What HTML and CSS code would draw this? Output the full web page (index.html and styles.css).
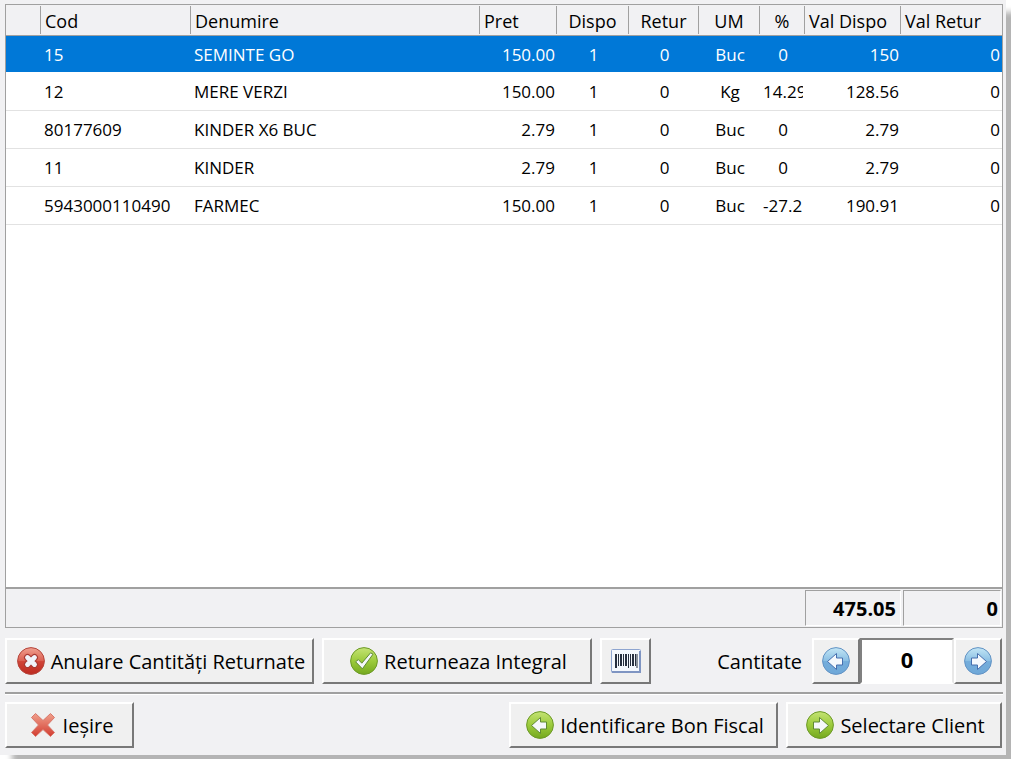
FILE: index.html
```html
<!DOCTYPE html>
<html lang="ro">
<head>
  <meta charset="UTF-8">
  <title>Retur</title>
  <link rel="stylesheet" href="styles.css">
</head>
<body>

  <!-- shared gradients -->
  <svg class="defs" width="0" height="0" aria-hidden="true">
    <defs>
      <linearGradient id="red" x1="0" y1="0" x2="0" y2="1">
        <stop offset="0" stop-color="#f0a090"/><stop offset=".48" stop-color="#dc6254"/>
        <stop offset=".52" stop-color="#d04438"/><stop offset="1" stop-color="#bd2a20"/>
      </linearGradient>
      <linearGradient id="green" x1="0" y1="0" x2="0" y2="1">
        <stop offset="0" stop-color="#c4e374"/><stop offset=".5" stop-color="#9ccb3c"/>
        <stop offset="1" stop-color="#74a81e"/>
      </linearGradient>
      <linearGradient id="blue" x1="0" y1="0" x2="0" y2="1">
        <stop offset="0" stop-color="#c3e6f5"/><stop offset=".48" stop-color="#8cc0e4"/>
        <stop offset=".52" stop-color="#74addb"/><stop offset="1" stop-color="#6fa8d8"/>
      </linearGradient>
      <linearGradient id="cross" x1="0" y1="0" x2="0" y2="1">
        <stop offset="0" stop-color="#f0a08c"/><stop offset="1" stop-color="#d23c30"/>
      </linearGradient>
    </defs>
  </svg>

  <main class="window">
    <section class="list">
      <table class="grid">
        <colgroup>
          <col class="w-mark"><col class="w-cod"><col><col class="w-pret"><col class="w-dispo">
          <col class="w-retur"><col class="w-um"><col class="w-pct"><col class="w-val"><col class="w-last">
        </colgroup>
        <thead>
          <tr>
            <th><span></span></th>
            <th><span>Cod</span></th>
            <th><span>Denumire</span></th>
            <th><span>Pret</span></th>
            <th class="center"><span>Dispo</span></th>
            <th class="center"><span>Retur</span></th>
            <th class="center"><span>UM</span></th>
            <th class="center"><span>%</span></th>
            <th><span>Val Dispo</span></th>
            <th><span>Val Retur</span></th>
          </tr>
        </thead>
        <tbody>
          <tr class="selected"><td></td><td>15</td><td>SEMINTE GO</td><td class="num">150.00</td><td class="center">1</td><td class="center">0</td><td class="center">Buc</td><td class="center">0</td><td class="num">150</td><td class="num">0</td></tr>
          <tr><td></td><td>12</td><td>MERE VERZI</td><td class="num">150.00</td><td class="center">1</td><td class="center">0</td><td class="center">Kg</td><td class="cut"><div>14.29</div></td><td class="num">128.56</td><td class="num">0</td></tr>
          <tr><td></td><td>80177609</td><td>KINDER X6 BUC</td><td class="num">2.79</td><td class="center">1</td><td class="center">0</td><td class="center">Buc</td><td class="center">0</td><td class="num">2.79</td><td class="num">0</td></tr>
          <tr><td></td><td>11</td><td>KINDER</td><td class="num">2.79</td><td class="center">1</td><td class="center">0</td><td class="center">Buc</td><td class="center">0</td><td class="num">2.79</td><td class="num">0</td></tr>
          <tr><td></td><td>5943000110490</td><td>FARMEC</td><td class="num">150.00</td><td class="center">1</td><td class="center">0</td><td class="center">Buc</td><td class="cut"><div>-27.2</div></td><td class="num">190.91</td><td class="num">0</td></tr>
        </tbody>
      </table>
      <div class="totals">
        <output class="total">475.05</output>
        <output class="total">0</output>
      </div>
    </section>

    <div class="toolbar">
      <button class="btn btn-cancel">
        <svg class="icon" viewBox="0 0 28 28"><circle cx="14" cy="14" r="13.4" fill="url(#red)" stroke="#b5463c"/><path d="M10.500 10.500l7 7M17.500 10.500l-7 7" stroke="#a83a34" stroke-width="7" stroke-linecap="round"/><path d="M10.500 10.500l7 7M17.500 10.500l-7 7" stroke="#f0f3fa" stroke-width="4.800" stroke-linecap="round"/></svg>
        Anulare Cantități Returnate
      </button>
      <button class="btn btn-all">
        <svg class="icon" viewBox="0 0 28 28"><circle cx="14" cy="14" r="13.4" fill="url(#green)" stroke="#6d9a28"/><path d="M5.6 14.8l2.8-2.2 3.4 3.6L20.6 5.800l2.400 1.400-10.600 14.600z" fill="#f5f8fa" stroke="#5f8a35" stroke-linejoin="round"/></svg>
        Returneaza Integral
      </button>
      <button class="btn btn-scan" aria-label="Cod de bare">
        <svg class="barcode" viewBox="0 0 30 24"><rect x=".5" y=".5" width="29" height="23" rx="1" fill="#f4f8fd" stroke="#8ea5d0"/><path d="M1 23h28V2" fill="none" stroke="#7f95c2" stroke-width="2"/><path d="M4 5h2v14H4zM7 5h1v12H7zM9 5h2v12H9zM12 5h1v12h-1zM14 5h2v12h-2zM17 5h1v14h-1zM19 5h1v12h-1zM21 5h2v12h-2zM24 5h1v12h-1zM25.500 5h1v14h-1z" fill="#27303f"/></svg>
      </button>
      <div class="quantity">
        <label for="qty">Cantitate</label>
        <button class="btn btn-step" aria-label="Minus">
          <svg class="icon" viewBox="0 0 28 28"><circle cx="14" cy="14" r="13.400" fill="url(#blue)" stroke="#6393c4"/><path d="M5.500 14.500L14.500 6.500V11H20.500V18H14.500V22.500z" fill="#f5f9fd" stroke="#466fae" stroke-linejoin="round"/></svg>
        </button>
        <input id="qty" type="text" value="0">
        <button class="btn btn-step" aria-label="Plus">
          <svg class="icon" viewBox="0 0 28 28"><circle cx="14" cy="14" r="13.400" fill="url(#blue)" stroke="#6393c4"/><path d="M22.500 14.500L13.500 6.500V11H7.500V18H13.500V22.500z" fill="#f5f9fd" stroke="#466fae" stroke-linejoin="round"/></svg>
        </button>
      </div>
    </div>

    <div class="toolbar bottom">
      <button class="btn btn-exit">
        <svg class="icon" viewBox="0 0 28 28"><path d="M2.500 6.500L6.500 2.500 14 9.500 21.500 2.500 25.500 6.500 18.500 14 25.500 21.500 21.500 25.500 14 18.500 6.500 25.500 2.500 21.500 9.500 14z" fill="url(#cross)" stroke="#d8776a" stroke-linejoin="round"/></svg>
        Ieșire
      </button>
      <button class="btn btn-ident">
        <svg class="icon" viewBox="0 0 28 28"><circle cx="14" cy="14" r="13.400" fill="url(#green)" stroke="#6d9a28"/><path d="M5.500 14.500L14.500 6.500V11H20.500V18H14.500V22.500z" fill="#f5f8fa" stroke="#5f8a35" stroke-linejoin="round"/></svg>
        Identificare Bon Fiscal
      </button>
      <button class="btn btn-client">
        <svg class="icon" viewBox="0 0 28 28"><circle cx="14" cy="14" r="13.400" fill="url(#green)" stroke="#6d9a28"/><path d="M22.500 14.500L13.500 6.500V11H7.500V18H13.500V22.500z" fill="#f5f8fa" stroke="#5f8a35" stroke-linejoin="round"/></svg>
        Selectare Client
      </button>
    </div>
  </main>

</body>
</html>
```

FILE: styles.css
```css
* {
  box-sizing: border-box;
}

body {
  margin: 0;
  height: 100vh;
  padding: 0 5px 4px 0;
  display: flex;
  overflow: hidden;
  background: #fff;
  font-family: "Segoe UI", "Open Sans", "Noto Sans", sans-serif;
  font-size: 17px;
  color: #000;
}

.defs {
  position: absolute;
}

.window {
  flex: 1;
  min-width: 0;
  display: flex;
  flex-direction: column;
  padding: 4px 3px 7px 5px;
  background: #f1f1f3;
  box-shadow: 12px 12px 6px #b4b4b4;
}

/* product list */
.list {
  flex: 1;
  display: flex;
  flex-direction: column;
  border: 1px solid #a0a0a0;
  background: #fff;
}

.grid {
  width: 100%;
  table-layout: fixed;
  border-collapse: separate;
  border-spacing: 0;
}

.w-mark { width: 35px; }
.w-cod { width: 150px; }
.w-pret { width: 77px; }
.w-dispo { width: 72px; }
.w-retur { width: 70px; }
.w-um { width: 61px; }
.w-pct { width: 45px; }
.w-val { width: 96px; }
.w-last { width: 101px; }

.grid th {
  height: 31px;
  padding: 0;
  background: #f1f1f3;
  border-bottom: 1px solid #a0a0a0;
  font-size: 18px;
  font-weight: normal;
  text-align: left;
}

.grid th span {
  display: block;
  height: 28px;
  line-height: 30px;
  padding-left: 4px;
  border-right: 1px solid #a0a0a0;
  white-space: nowrap;
}

.grid th.center span {
  padding-left: 0;
}

.grid th:last-child span {
  border-right: 0;
}

.grid td {
  height: 38px;
  padding: 0 2px 0 3px;
  border-bottom: 1px solid #e2e2e2;
  white-space: nowrap;
}

.grid .center {
  text-align: center;
}

.grid .num {
  text-align: right;
}

.cut div {
  overflow: hidden;
}

.grid .selected td {
  height: 37px;
  background: #0078d7;
  border-bottom-color: #fff;
  color: #fff;
}

.totals {
  display: flex;
  justify-content: flex-end;
  gap: 2px;
  margin-top: auto;
  padding: 1px 1px 1px 0;
  border-top: 2px solid #a0a0a0;
  background: #f1f1f3;
}

.total {
  width: 96px;
  height: 36px;
  line-height: 36px;
  padding-right: 4px;
  border: 1px solid #fff;
  border-top-color: #a0a0a0;
  border-left-color: #a0a0a0;
  font-size: 20px;
  font-weight: bold;
  text-align: right;
}

.total:last-child {
  width: 98px;
  padding-right: 2px;
}

/* buttons */
.toolbar {
  display: flex;
  gap: 8px;
  padding: 10px 1px 8px 0;
}

.bottom {
  padding-bottom: 0;
  padding-top: 8px;
  border-top: 2px solid #a0a0a0;
  box-shadow: inset 0 1px #fff;
}

.btn {
  display: flex;
  align-items: center;
  justify-content: center;
  gap: 6px;
  height: 46px;
  padding: 0;
  border: 2px solid;
  border-color: #fff #787878 #787878 #fff;
  background: #f0f0f0;
  font-family: inherit;
  font-size: 20px;
  color: #000;
  white-space: nowrap;
}

.icon {
  width: 28px;
  height: 28px;
  flex: none;
}

.barcode {
  width: 30px;
  height: 24px;
}

.btn-cancel,
.btn-all,
.btn-exit,
.btn-ident,
.btn-client {
  padding-left: 3px;
}

.btn-cancel { width: 309px; }
.btn-all { width: 270px; }
.btn-scan { width: 51px; }
.btn-step { width: 48px; }
.btn-exit { width: 129px; }
.btn-ident { width: 269px; margin-left: auto; }
.btn-client { width: 216px; }

.quantity {
  display: flex;
  align-items: center;
  margin-left: auto;
  font-size: 20px;
}

.quantity label {
  margin-right: 10px;
}

.quantity input {
  width: 94px;
  height: 46px;
  padding: 0 0 4px;
  border: 2px solid;
  border-color: #808080 #e8e8e8 #fff #808080;
  background: #fff;
  font-family: inherit;
  font-size: 22px;
  font-weight: bold;
  text-align: center;
}
```
